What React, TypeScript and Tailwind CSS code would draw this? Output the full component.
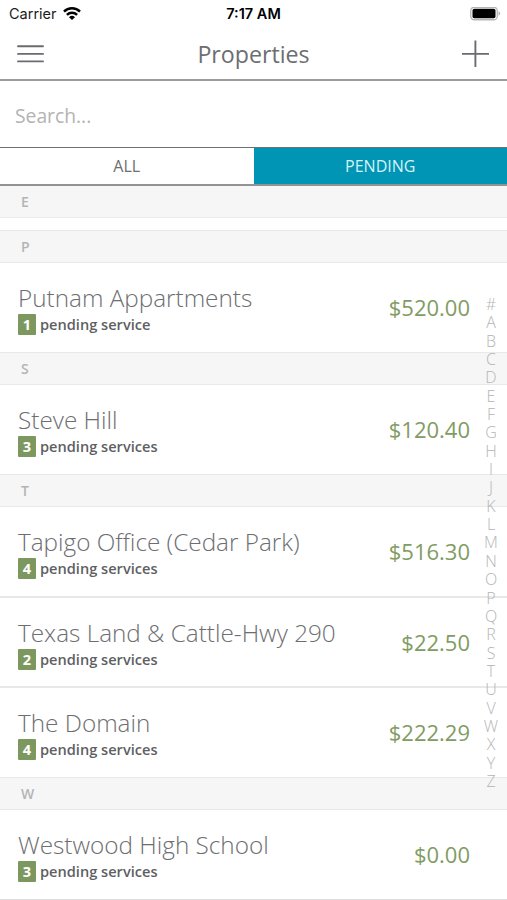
interface Property {
  name: string;
  pending: number;
  total: string;
}

interface Section {
  letter: string;
  items: Property[];
}

const sections: Section[] = [
  { letter: 'P', items: [{ name: 'Putnam Appartments', pending: 1, total: '$520.00' }] },
  { letter: 'S', items: [{ name: 'Steve Hill', pending: 3, total: '$120.40' }] },
  {
    letter: 'T',
    items: [
      { name: 'Tapigo Office (Cedar Park)', pending: 4, total: '$516.30' },
      { name: 'Texas Land & Cattle-Hwy 290', pending: 2, total: '$22.50' },
      { name: 'The Domain', pending: 4, total: '$222.29' },
    ],
  },
  { letter: 'W', items: [{ name: 'Westwood High School', pending: 3, total: '$0.00' }] },
];

const indexLetters = '#ABCDEFGHIJKLMNOPQRSTUVWXYZ'.split('');

function StatusBar() {
  return (
    <div className="grid h-7 grid-cols-3 items-center px-[7px] font-['Inter',sans-serif] text-[14.5px] text-[#1c1c1c]">
      <div className="flex items-center gap-[6px] pl-[2px]">
        <span className="leading-7">Carrier</span>
        <svg className="h-[14px] w-[18px]" viewBox="0 0 18 14" fill="none" stroke="#000" strokeWidth="2.5">
          <path d="M1 4.6a11.4 11.4 0 0 1 16 0" />
          <path d="M3.9 7.9a7.3 7.3 0 0 1 10.2 0" />
          <path d="M9 13.1 6 10.2a4.3 4.3 0 0 1 6 0Z" fill="#000" stroke="none" />
        </svg>
      </div>
      <span className="text-center font-semibold leading-7 text-black">7:17 AM</span>
      <svg className="-mr-px h-[14px] w-[31px] justify-self-end" viewBox="0 0 31 14">
        <rect x="0.75" y="0.25" width="26.5" height="12.5" rx="3.5" fill="#fff" stroke="#b5b5b5" strokeWidth="1.3" />
        <rect x="2.5" y="1.8" width="23" height="9.4" rx="1.8" fill="#000" />
        <path d="M28.5 4.3v4.4c1-.4 1.7-1.2 1.7-2.2s-.7-1.8-1.7-2.2Z" fill="#b5b5b5" />
      </svg>
    </div>
  );
}

function Header() {
  return (
    <header className="flex h-[53px] items-center justify-between border-b-2 border-[#9b9b9b] px-[17px]">
      <svg className="h-[27px] w-[27px]" viewBox="0 0 27 27" stroke="#6b6b70" strokeWidth="1.9" strokeLinecap="round">
        <path d="M1 6.2h25M1 13.9h25M1 21.4h25" />
      </svg>
      <h1 className="pl-px text-[23.2px] leading-[50px] text-[#6d6e71]">Properties</h1>
      <svg className="mr-px h-[27px] w-[27px]" viewBox="0 0 27 27" stroke="#6b6b70" strokeWidth="1.9">
        <path d="M0 13.9h27M13.4 .5v27" />
      </svg>
    </header>
  );
}

function SectionHeader({ letter }: { letter: string }) {
  return (
    <div className="h-[33px] border-y border-[#e9e9e9] bg-[#f6f6f6] pl-[21px] text-[14px] font-semibold leading-[31px] text-[#b4b4b6]">
      {letter}
    </div>
  );
}

function PropertyRow({ item }: { item: Property }) {
  return (
    <div className="flex h-[90.5px] items-start justify-between border-b-2 border-[#e8e8ea] pl-[18px] pr-[37px] last:h-[89px] last:border-b-0">
      <div>
        <h2 className="mt-[19px] text-[24.3px] font-light leading-8 text-[#6d6e71]">{item.name}</h2>
        <div className="flex items-center gap-1 text-[14.6px] font-semibold leading-[21px] text-[#5e5f63]">
          <span className="h-[21px] w-[18px] rounded-[1px] bg-[#7d985f] text-center font-bold text-white">
            {item.pending}
          </span>
          <span>{item.pending === 1 ? 'pending service' : 'pending services'}</span>
        </div>
      </div>
      <span className="mt-[28px] text-[22px] leading-8 text-[#819c62]">{item.total}</span>
    </div>
  );
}

export default function App() {
  return (
    <div className="relative h-[900px] w-[507px] overflow-hidden bg-white font-['Open_Sans',sans-serif]">
      <StatusBar />
      <Header />

      <input
        type="text"
        placeholder="Search..."
        className="block h-[66px] w-full pl-[15px] pt-[3px] text-[19.3px] text-[#6d6e71] outline-none placeholder:text-[#b3b3b3]"
      />

      <div className="grid h-[39px] grid-cols-2 border-b-2 border-t border-b-[#929397] border-t-[#6f7074] text-center text-[16px] leading-9">
        <button className="text-[#6d6e71]">ALL</button>
        <button className="bg-[#0094b5] text-[#d5f3f9]">PENDING</button>
      </div>

      <div className="mb-3 h-8 border-b border-[#ececec] bg-[#f6f6f6] pl-[21px] text-[14px] font-semibold leading-[31px] text-[#b4b4b6]">
        E
      </div>

      {sections.map(section => (
        <section key={section.letter}>
          <SectionHeader letter={section.letter} />
          <div>
            {section.items.map(item => (
              <PropertyRow key={item.name} item={item} />
            ))}
          </div>
        </section>
      ))}
      <div className="h-px bg-[#dededf]" />

      <nav className="absolute right-[6px] top-[295px] flex w-5 flex-col items-center text-[16px] font-light leading-[18.35px] text-[#b4b4b6]">
        {indexLetters.map(letter => (
          <span key={letter}>{letter}</span>
        ))}
      </nav>
    </div>
  );
}
